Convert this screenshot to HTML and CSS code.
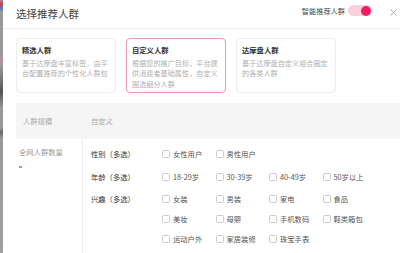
FILE: index.html
```html
<!DOCTYPE html>
<html lang="zh-CN">
<head>
    <meta charset="UTF-8">
    <title>选择推荐人群</title>
    <link rel="stylesheet" href="styles.css">
</head>
<body>
    <div class="backdrop"></div>
    <div class="dialog">
        <header class="dialog-head">
            <h1>选择推荐人群</h1>
            <div class="smart">
                <span>智能推荐人群</span>
                <span class="switch"><span class="knob"></span></span>
            </div>
            <span class="close">
                <svg width="7" height="7" viewBox="0 0 7 7">
                    <path d="M0.5 0.5 L6.5 6.5 M6.5 0.5 L0.5 6.5" stroke="#aaa" stroke-width="1" fill="none"/>
                </svg>
            </span>
        </header>

        <div class="cards">
            <div class="card">
                <h3>精选人群</h3>
                <p>基于达摩盘丰富标签，由平台配置推荐的个性化人群包</p>
            </div>
            <div class="card active">
                <h3>自定义人群</h3>
                <p>根据您的推广目标，平台提供消费者基础属性，自定义圈选细分人群</p>
            </div>
            <div class="card">
                <h3>达摩盘人群</h3>
                <p>基于达摩盘自定义组合圈定的各类人群</p>
            </div>
        </div>

        <div class="table">
            <div class="thead">
                <div class="col-left">人群规模</div>
                <div class="col-right">自定义</div>
            </div>
            <div class="tbody">
                <div class="col-left">
                    <div class="count">全网人群数量</div>
                    <div class="dash"></div>
                </div>
                <div class="col-right">
                    <div class="group">
                        <div class="label">性别（多选）</div>
                        <div class="options">
                            <label><i></i>女性用户</label>
                            <label><i></i>男性用户</label>
                        </div>
                    </div>
                    <div class="group">
                        <div class="label">年龄（多选）</div>
                        <div class="options">
                            <label><i></i>18-29岁</label>
                            <label><i></i>30-39岁</label>
                            <label><i></i>40-49岁</label>
                            <label><i></i>50岁以上</label>
                        </div>
                    </div>
                    <div class="group">
                        <div class="label">兴趣（多选）</div>
                        <div class="options">
                            <label><i></i>女装</label>
                            <label><i></i>男装</label>
                            <label><i></i>家电</label>
                            <label><i></i>食品</label>
                            <label><i></i>美妆</label>
                            <label><i></i>母婴</label>
                            <label><i></i>手机数码</label>
                            <label><i></i>鞋类箱包</label>
                            <label><i></i>运动户外</label>
                            <label><i></i>家居装修</label>
                            <label><i></i>珠宝手表</label>
                        </div>
                    </div>
                </div>
            </div>
        </div>
    </div>
</body>
</html>
```

FILE: styles.css
```css
* {
    box-sizing: border-box;
}
body {
    margin: 0;
    width: 400px;
    height: 253px;
    overflow: hidden;
    display: flex;
    font-family: "Noto Sans CJK SC", "Noto Sans", sans-serif;
    background-color: #fff;
    color: #333;
}
.backdrop {
    width: 3px;
    flex: none;
    background: linear-gradient(to bottom,
        #9a8a8a 0, #d04040 4px, #4a7ac0 8px, #999 12px,
        #9a9a9a 55px, #c088a0 60px, #999 66px,
        #555 92px, #777 100px, #999 108px,
        #999 128px, #666 132px, #999 138px, #a0a0a0 100%);
}
.dialog {
    flex: 1;
    min-width: 0;
    background-color: #fff;
}
.dialog-head {
    height: 29px;
    border-bottom: 1px solid #eee;
    display: flex;
    align-items: flex-start;
    padding: 0 3px 1px 13px;
}
h1 {
    margin: 8px 0 0;
    font-size: 10.5px;
    line-height: 12px;
    font-weight: normal;
    color: #444;
    flex: 1;
}
.smart {
    display: flex;
    align-items: center;
    margin-top: 5px;
    font-size: 7.2px;
    color: #444;
}
.switch {
    width: 24px;
    height: 11px;
    margin-left: 3px;
    border-radius: 6px;
    background-color: #fbd0dd;
    display: flex;
    justify-content: flex-end;
    align-items: center;
    padding-right: 1px;
}
.knob {
    width: 10px;
    height: 10px;
    border-radius: 50%;
    background-color: #ef1d5e;
}
.close {
    display: flex;
    flex: none;
    width: 7px;
    height: 7px;
    margin: 9px 0 0 18px;
}
.cards {
    display: flex;
    gap: 10px;
    padding: 9px 0 0 13px;
}
.card {
    width: 100px;
    height: 55px;
    border: 1px solid #eee;
    border-radius: 4px;
    padding: 5px 5px 0 5px;
}
.card.active {
    border-color: #e89ab5;
    border-width: 1.2px;
}
.card h3 {
    margin: 0 0 2px;
    font-size: 7.3px;
    line-height: 12px;
    font-weight: bold;
    color: #333;
}
.card p {
    margin: 0;
    font-size: 7.1px;
    line-height: 10.3px;
    color: #b0b0b0;
    letter-spacing: 0.05px;
}
.table {
    margin: 10px 0 0 13px;
    font-size: 7.3px;
}
.thead {
    display: flex;
    height: 36px;
    background-color: #f5f5f5;
    color: #aaa;
    align-items: center;
}
.thead .col-left {
    padding-left: 7px;
}
.thead .col-right {
    padding-left: 8px;
}
.col-left {
    width: 67px;
    flex: none;
}
.tbody {
    display: flex;
}
.tbody .col-left {
    border-right: 1px solid #eee;
    padding: 8px 0 0 3px;
    height: 120px;
    color: #999;
}
.dash {
    width: 3px;
    height: 1.5px;
    margin-top: 9px;
    background-color: #f07aa0;
}
.tbody .col-right {
    padding: 5px 0 0 8px;
}
.group {
    display: flex;
    margin-bottom: 2.5px;
}
.label {
    width: 71px;
    flex: none;
    line-height: 20px;
    color: #333;
}
.options {
    display: grid;
    grid-template-columns: repeat(4, 53.5px);
    color: #555;
}
.options label {
    display: flex;
    align-items: center;
    height: 20px;
    white-space: nowrap;
}
.options i {
    width: 8px;
    height: 8px;
    border: 1px solid #ccc;
    border-radius: 1.5px;
    margin-right: 3px;
    background-color: #fff;
}
```
